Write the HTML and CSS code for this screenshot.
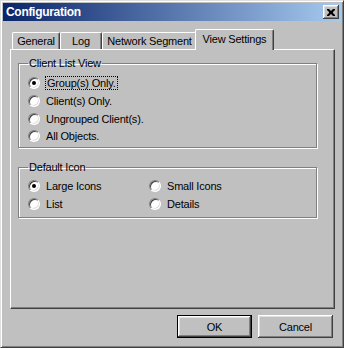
FILE: index.html
```html
<!DOCTYPE html>
<html lang="en">
<head>
  <meta charset="UTF-8" />
  <title>Configuration</title>
  <link rel="stylesheet" href="styles.css">
</head>
<body>
  <div class="window">
    <div class="titlebar">
      <span class="title">Configuration</span>
      <button class="close-btn" aria-label="Close">
        <svg width="8" height="7" viewBox="0 0 8 7">
          <path d="M0 0h2l2 2 2-2h2v1l-2 2v1l2 2v1h-2l-2-2-2 2h-2v-1l2-2v-1l-2-2z" fill="#000"/>
        </svg>
      </button>
    </div>

    <div class="content">
      <div class="tabs">
        <div class="tab tab-general">General</div>
        <div class="tab tab-log">Log</div>
        <div class="tab tab-network">Network Segment</div>
        <div class="tab tab-view selected">View Settings</div>
      </div>

      <div class="panel">
        <fieldset class="group group-list">
          <legend>Client List View</legend>
          <label class="radio row-1"><span class="dot checked"></span><span class="focus">Group(s) Only.</span></label>
          <label class="radio row-2"><span class="dot"></span><span>Client(s) Only.</span></label>
          <label class="radio row-3"><span class="dot"></span><span>Ungrouped Client(s).</span></label>
          <label class="radio row-4"><span class="dot"></span><span>All Objects.</span></label>
        </fieldset>

        <fieldset class="group group-icon">
          <legend>Default Icon</legend>
          <div class="icon-grid">
            <label class="radio"><span class="dot checked"></span><span>Large Icons</span></label>
            <label class="radio"><span class="dot"></span><span>Small Icons</span></label>
            <label class="radio"><span class="dot"></span><span>List</span></label>
            <label class="radio"><span class="dot"></span><span>Details</span></label>
          </div>
        </fieldset>
      </div>

      <div class="buttons">
        <button class="btn btn-default">OK</button>
        <button class="btn">Cancel</button>
      </div>
    </div>
  </div>
</body>
</html>
```

FILE: styles.css
```css
body {
  margin: 0;
  background: #c0c0c0;
  font-family: "Liberation Sans", Arial, sans-serif;
  font-size: 11px;
  letter-spacing: -0.2px;
  color: #000;
}
.window {
  width: 344px;
  height: 348px;
  box-sizing: border-box;
  background: #c0c0c0;
  border-top: 1px solid #dfdfdf;
  border-left: 1px solid #dfdfdf;
  border-right: 1px solid #404040;
  border-bottom: 1px solid #404040;
  box-shadow: inset 1px 1px #fff, inset -1px -1px #808080;
  padding: 2px;
}
.titlebar {
  height: 18px;
  display: flex;
  align-items: center;
  justify-content: space-between;
  padding: 0 2px 0 3px;
  background: linear-gradient(to right, #0a246a, #a6caf0);
}
.title {
  color: #fff;
  font-weight: bold;
  font-size: 12px;
  letter-spacing: -0.3px;
}
.close-btn {
  width: 16px;
  height: 14px;
  padding: 0;
  display: flex;
  align-items: center;
  justify-content: center;
  background: #c0c0c0;
  border: none;
  box-shadow: inset -1px -1px #404040, inset 1px 1px #fff, inset -2px -2px #808080, inset 2px 2px #dfdfdf;
}
.content {
  padding: 8px 6px 0 7px;
}
.tabs {
  display: flex;
  height: 20px;
  padding-left: 2px;
  position: relative;
  z-index: 1;
}
.tab {
  box-sizing: border-box;
  height: 17px;
  margin-top: 3px;
  padding-top: 2px;
  text-align: center;
  background: #c0c0c0;
  border-top: 1px solid #fff;
  border-left: 1px solid #fff;
  border-right: 1px solid #404040;
  box-shadow: inset -1px 0 #808080;
  border-radius: 2px 2px 0 0;
}
.tab-general { width: 48px; }
.tab-log { width: 42px; }
.tab-network { width: 95px; }
.tab-view { width: 79px; }
.tab.selected {
  height: 21px;
  margin: 0 -2px -1px -2px;
  padding-top: 3px;
}
.panel {
  box-sizing: border-box;
  width: 325px;
  height: 260px;
  border-top: 1px solid #fff;
  border-left: 1px solid #fff;
  border-right: 1px solid #404040;
  border-bottom: 1px solid #404040;
  box-shadow: inset -1px -1px #808080;
  padding: 7px 0 0 7px;
}
.group {
  width: 299px;
  box-sizing: border-box;
  margin: 0;
  border: 1px solid #808080;
  box-shadow: inset 1px 1px #fff, 1px 1px #fff;
}
.group legend {
  padding: 0 1px;
  margin-left: 0;
  line-height: 13px;
}
.group-list {
  height: 91px;
  padding: 3px 0 0 9px;
}
.group-icon {
  height: 57px;
  margin-top: 13px;
  padding: 3px 0 0 9px;
}
.radio {
  display: flex;
  align-items: center;
  height: 18px;
}
.group-list .row-1 { height: 19px; }
.group-list .row-4 { height: 16px; }
.dot {
  box-sizing: border-box;
  width: 12px;
  height: 12px;
  border-radius: 50%;
  background: #fff;
  border-top: 1px solid #808080;
  border-left: 1px solid #808080;
  border-right: 1px solid #fff;
  border-bottom: 1px solid #fff;
  box-shadow: inset 1px 1px #404040, inset -1px -1px #dfdfdf;
  margin-right: 6px;
  position: relative;
}
.dot.checked::after {
  content: "";
  position: absolute;
  left: 3px;
  top: 3px;
  width: 4px;
  height: 4px;
  border-radius: 50%;
  background: #000;
}
.focus {
  outline: 1px dotted #000;
  outline-offset: 0;
  padding: 0 1px;
}
.icon-grid {
  display: grid;
  grid-template-columns: 121px 1fr;
}
.buttons {
  display: flex;
  justify-content: flex-end;
  gap: 6px;
  margin-top: 6px;
  padding-right: 2px;
}
.btn {
  width: 75px;
  height: 23px;
  padding: 0;
  font-family: "Liberation Sans", Arial, sans-serif;
  font-size: 11px;
  letter-spacing: -0.2px;
  color: #000;
  background: #c0c0c0;
  border: none;
  box-shadow: inset -1px -1px #404040, inset 1px 1px #fff, inset -2px -2px #808080, inset 2px 2px #dfdfdf;
}
.btn-default {
  border: 1px solid #000;
}
```
